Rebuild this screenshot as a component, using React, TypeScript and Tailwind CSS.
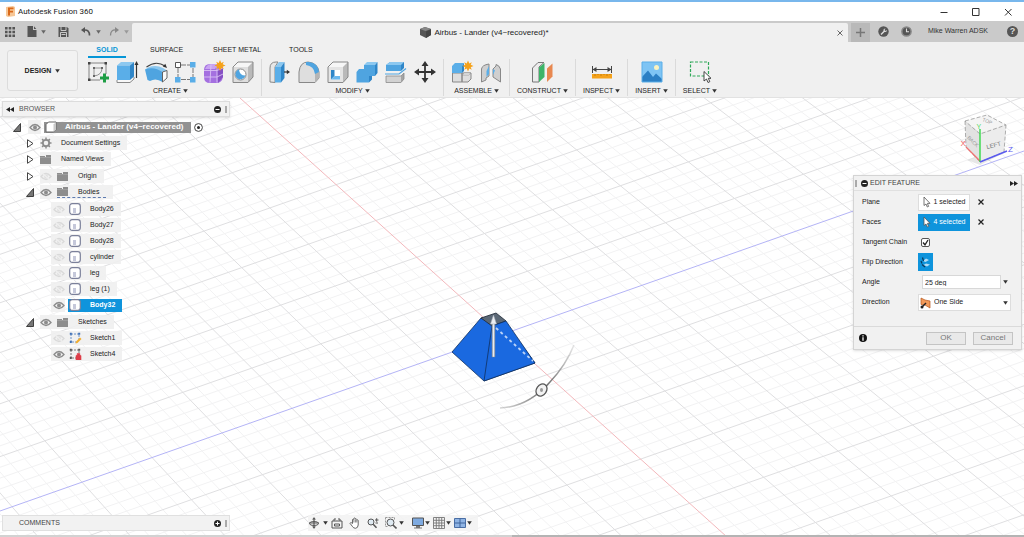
import React from "react";

type P = [number, number];

/* ---------- ground grid ---------- */

// Plane -> screen projection. u runs along the blue axis, v along the red axis.
const project = (u: number, v: number): P => {
  const w = 1 - 0.015 * v;
  return [502 + (70 * u + 44 * v) / w, 334.5 + (-24.6 * u + 39.7 * v) / w];
};

const line = (a: P, b: P) => `M${a[0].toFixed(1)} ${a[1].toFixed(1)}L${b[0].toFixed(1)} ${b[1].toFixed(1)}`;

const buildGrid = () => {
  let minor = "";
  let major = "";
  const n = 16;
  for (let i = -n * 5; i <= n * 5; i++) {
    if (i === 0) continue;
    const k = i / 5;
    const d = line(project(k, -n), project(k, n)) + line(project(-n, k), project(n, k));
    if (i % 5 === 0) major += d;
    else minor += d;
  }
  return { minor, major };
};

const grid = buildGrid();

const Scene = () => (
  <svg className="absolute inset-0 h-full w-full" viewBox="0 98 1024 437" preserveAspectRatio="xMidYMid slice" aria-hidden="true">
    <defs>
      <linearGradient id="shaft" x1="0" x2="1">
        <stop offset="0" stopColor="#8f9aa8" />
        <stop offset="0.5" stopColor="#e8ecf2" />
        <stop offset="1" stopColor="#8f9aa8" />
      </linearGradient>
      <linearGradient id="arc" x1="500" y1="408" x2="574" y2="345" gradientUnits="userSpaceOnUse">
        <stop offset="0" stopColor="#777" stopOpacity="0.3" />
        <stop offset="0.5" stopColor="#666" />
        <stop offset="1" stopColor="#888" stopOpacity="0.2" />
      </linearGradient>
    </defs>
    <path d={grid.minor} stroke="#f2f2f3" fill="none" />
    <path d={grid.major} stroke="#dfdfe1" fill="none" />
    <path d="M0 511L1024 151" stroke="#b4b4f6" fill="none" />
    <path d="M240 98L727 537" stroke="#f3b8bc" fill="none" />
    <path d="M452 352L481 318L504 321L535 363L484 381Z" fill="#1a69e0" stroke="#10305e" strokeWidth="0.8" />
    <path d="M481 318L496 313L506 321L492 326Z" fill="#5b6876" stroke="#1d2733" strokeWidth="0.8" />
    <path d="M492 326L506 321L535 363L484 381Z" fill="#1a69e0" stroke="#10305e" strokeWidth="0.8" />
    <path d="M496 328L533 361" stroke="#b9d2f8" strokeWidth="1.8" strokeDasharray="3 3" />
    <rect x="492" y="322" width="3" height="35" fill="url(#shaft)" stroke="#7d8896" strokeWidth="0.4" />
    <path d="M493.500 315L496.500 324H490.500Z" fill="#eceff3" stroke="#a5adb8" strokeWidth="0.5" />
    <path d="M500 408Q528 407 550 382Q566 365 574 345" stroke="url(#arc)" strokeWidth="1.500" fill="none" />
    <ellipse cx="541.500" cy="390" rx="5" ry="6.500" transform="rotate(35 541.5 390)" fill="#f2f2f2" stroke="#555" strokeWidth="1.300" />
    <ellipse cx="541.500" cy="390" rx="1.500" ry="2" fill="#999" />
  </svg>
);

const ViewCube = () => (
  <svg width="62" height="54" viewBox="956 112 62 54" className="block" role="img" aria-label="View cube">
    <path d="M967 160L980 165L1006 152L1000 148Z" fill="#00000018" />
    <path d="M965 121L980 132V162L966 147Z" fill="#e2e2e2" />
    <path d="M980 132L1006 125L1004 152L980 162Z" fill="#ececec" />
    <path d="M965 121L987 115L1006 125L980 133Z" fill="#f4f4f4" />
    <path d="M965 121L987 115L1006 125L980 134ZM965 121L966 147L980 162L1004 152L1006 125" fill="none" stroke="#999" strokeWidth="0.8" strokeDasharray="4 2" />
    <path d="M980 161L966 147" stroke="#f07070" strokeWidth="1.200" />
    <path d="M980 162V129" stroke="#34d848" strokeWidth="1.400" />
    <path d="M980 162L1007 151" stroke="#5a5af0" strokeWidth="1.400" />
    <text x="0" y="0" transform="translate(987 149) rotate(-14)" fontSize="6" fontFamily="Liberation Sans" fill="#777">LEFT</text>
    <text x="0" y="0" transform="translate(967 138) rotate(45)" fontSize="5" fontFamily="Liberation Sans" fill="#999">BACK</text>
    <text x="0" y="0" transform="translate(982 121) rotate(22)" fontSize="5" fontFamily="Liberation Sans" fill="#999">TOP</text>
    <text x="960.500" y="146" fontSize="8" fontFamily="Liberation Sans" fill="#f05a5a">X</text>
    <text x="976.500" y="129" fontSize="7" fontFamily="Liberation Sans" fill="#5ada66">Y</text>
    <text x="1008" y="152" fontSize="8" fontFamily="Liberation Sans" fill="#5a5af0">Z</text>
  </svg>
);

/* ---------- toolbar icons (24 x 24) ---------- */

const Ico = ({ children, size = 24 }: { children: React.ReactNode; size?: number }) => (
  <svg width={size} height={size} viewBox="0 0 24 24" fill="none" className="block shrink-0" aria-hidden="true">
    {children}
  </svg>
);

const Burst = ({ x, y }: { x: number; y: number }) => (
  <path
    transform={`translate(${x} ${y})`}
    d="M0 -5.500L1.300 -2.600L3.800 -3.800L2.700 -1.200L5.500 0L2.700 1.200L3.800 3.800L1.300 2.600L0 5.500L-1.300 2.600L-3.800 3.800L-2.700 1.200L-5.500 0L-2.700 -1.200L-3.800 -3.800L-1.300 -2.600Z"
    fill="#f5a21b"
  />
);

const icons: Record<string, React.ReactNode> = {
  "Create Sketch": (
    <Ico>
      <path d="M3 3H20M3 3V20H14M20 3V14" stroke="#777" strokeWidth="0.9" />
      <path d="M2 2h2.500v2.500H2zM18.500 2H21v2.500h-2.500zM2 18.500h2.500V21H2z" fill="#444" />
      <path d="M8 8H16Q16 15 8 16Z" stroke="#888" strokeWidth="0.9" />
      <path d="M7 7h2v2H7zM15 7h2v2h-2zM7 15h2v2H7z" fill="#666" />
      <path d="M18.500 13.500V22.500M14 18H23" stroke="#1e9e45" strokeWidth="3" />
    </Ico>
  ),
  Extrude: (
    <Ico>
      <path d="M2 20V22.500H15L19 19V17" stroke="#888" fill="#f8f8f8" />
      <path d="M2 5.500L6 2H19L15 5.500Z" fill="#8cc8f0" />
      <path d="M2 5.500H15V20H2Z" fill="#5aaee8" />
      <path d="M15 5.500L19 2V16.500L15 20Z" fill="#2f86c8" />
      <path d="M21.500 18V4" stroke="#333" strokeWidth="1.200" />
      <path d="M21.500 1L23.500 5H19.500Z" fill="#333" />
    </Ico>
  ),
  Revolve: (
    <Ico>
      <path d="M2.500 7Q12 0 21 6" stroke="#444" strokeWidth="1.100" />
      <path d="M23 8L18.800 6.500L21.300 3.800Z" fill="#333" />
      <path d="M1 9.500L4 7.500Q12 4.500 19 8L23 10.500L18 12Z" fill="#8cc8f0" />
      <path d="M1 9.500Q10 6 18.500 12V22Q12 17.500 6 21L3.500 20Z" fill="#4fa4e0" />
      <path d="M18.500 12L23 10.500V18L18.500 22Z" fill="#fafafa" stroke="#555" strokeWidth="0.9" />
    </Ico>
  ),
  Pattern: (
    <Ico>
      <path d="M8 5H18M5 8V17M8 19.500H18M20 8V17" stroke="#777" strokeDasharray="5 1" />
      <path d="M2.500 2.500H7.500V7.500H2.500Z" fill="#fff" stroke="#555" />
      <path d="M17 2H22.500V7.500H17ZM2 17H7.500V22.500H2ZM17 17H22.500V22.500H17Z" fill="#5aaee8" />
    </Ico>
  ),
  "Create Form": (
    <Ico>
      <path d="M2 10Q2 4 8 4H15Q21 4 21 10V17Q20 23 14 23H8Q2 23 2 17Z" fill="#a470e0" />
      <path d="M3 9Q5 4 10 4H16L13 9Z" fill="#c9a4f2" />
      <path d="M15 10L21 7V17L16 23Z" fill="#8550c4" />
      <path d="M9 4.500L8 22.500M15 5L15 22.500M2 10.500H15L21 8M2 17H15L21 14" stroke="#d9c2f5" strokeWidth="0.9" />
      <Burst x={18} y={5.5} />
    </Ico>
  ),
  Hole: (
    <Ico>
      <path d="M2 7L7 2H22L17 7Z" fill="#f6f6f6" />
      <path d="M17 7L22 2V17L17 22.500Z" fill="#b9b9b9" />
      <path d="M2 7H17V22.500H2Z" fill="#dedede" />
      <path d="M2 7L7 2H22V17L17 22.500H2Z" stroke="#888" />
      <circle cx="9.500" cy="14.500" r="5.500" fill="#fff" stroke="#888" />
      <path d="M8 9.500A5 5 0 1 0 14.300 15.500Q8.500 15.500 8 9.500Z" fill="#4fa4e0" />
    </Ico>
  ),
  "Press Pull": (
    <Ico>
      <path d="M2 22V8Q2 2 8 2H10L7 7V22.500Z" fill="#e6e6e6" stroke="#888" />
      <path d="M7 7L11 2H16.500L13 7Z" fill="#8cc8f0" />
      <path d="M7 7H13V22.500H7Z" fill="#5aaee8" />
      <path d="M13 7L16.500 2V18L13 22.500Z" fill="#2f86c8" />
      <path d="M16 12H20" stroke="#333" strokeWidth="1.200" />
      <path d="M22 12L18.800 9.800V14.200Z" fill="#333" />
    </Ico>
  ),
  Fillet: (
    <Ico>
      <path d="M2 22.500V12Q3 2 11 2Q21 3 22 12V18L18 22.500Z" fill="#dedede" stroke="#888" />
      <path d="M18 22.500V13L22 11V18Z" fill="#b5b5b5" />
      <path d="M9 2H12Q21 3 22 12L18 14Q17 6 9 5Z" fill="#4fa4e0" />
    </Ico>
  ),
  Shell: (
    <Ico>
      <path d="M2 7L7 2H22L17 7Z" fill="#f6f6f6" />
      <path d="M17 7L22 2V17L17 22.500Z" fill="#b9b9b9" />
      <path d="M2 7H17V22.500H2Z" fill="#e4e4e4" />
      <path d="M2 7L7 2H22V17L17 22.500H2Z" stroke="#888" />
      <path d="M5 10H14V19.500H5Z" fill="#fff" />
      <path d="M5 10V19.500L8.500 16V10Z" fill="#2f86c8" />
      <path d="M5 19.500H14V16H8.500Z" fill="#6bb8ee" />
    </Ico>
  ),
  Combine: (
    <Ico>
      <path d="M9 5L12 2H22.500L20 5Z" fill="#8cc8f0" />
      <path d="M1.500 12L4 9H9V5H20V16H14V22.500H1.500Z" fill="#4fa4e0" />
      <path d="M20 5L22.500 2V13L20 16ZM14 16H17V19.500L14 22.500Z" fill="#2f86c8" />
    </Ico>
  ),
  Split: (
    <Ico>
      <path d="M2 5L6 2H20L17 5V11H2Z" fill="#4fa4e0" />
      <path d="M2 5L6 2H20L17 5Z" fill="#8cc8f0" />
      <path d="M17 5L20 2V8L17 11Z" fill="#2f86c8" />
      <path d="M1 14H15L22 8.500" stroke="#4fa4e0" strokeWidth="1.200" />
      <path d="M2 16H17V22.500H2Z" fill="#d2d2d2" />
      <path d="M17 16L20 13V19L17 22.500Z" fill="#a5a5a5" />
      <path d="M2 16H17L20 13V19L17 22.500H2Z" stroke="#8c8c8c" strokeWidth="0.8" />
    </Ico>
  ),
  Move: (
    <Ico>
      <path d="M12 4V20M4 12H20" stroke="#333" strokeWidth="1.800" />
      <path d="M12 1L15.500 6H8.500ZM12 23L15.500 18H8.500ZM1 12L6 8.500V15.500ZM23 12L18 8.500V15.500Z" fill="#333" />
    </Ico>
  ),
  "New Component": (
    <Ico>
      <path d="M2.500 13H12V22H2.500ZM12 13H21V19L18 22H12Z" fill="#dedede" stroke="#888" />
      <path d="M12 15L14.500 13H21L18.500 15Z" fill="#f7f7f7" stroke="#888" strokeWidth="0.600" />
      <path d="M2 6L5 3H14L12 6V13H2Z" fill="#5aaee8" />
      <path d="M12 6L14 3V11L12 13Z" fill="#2f86c8" />
      <Burst x={18} y={6} />
    </Ico>
  ),
  Joint: (
    <Ico>
      <path d="M2.500 9Q3 5 10 4V16L7 18V20L2.500 22Z" fill="#cfcfcf" stroke="#888" />
      <path d="M21.500 9Q20 5 17 4.500V6L14 9V17L17 19L21.500 22Z" fill="#cfcfcf" stroke="#888" />
      <path d="M10 6L7.500 11V17L10 14ZM14 9L16 10.500L14 15Z" fill="#5aaee8" />
    </Ico>
  ),
  "Offset Plane": (
    <Ico>
      <path d="M2.500 8L8 2.500H14L9 7V22H2.500Z" fill="#ececec" stroke="#777" />
      <path d="M9 7.500L14.500 3V17L9 22Z" fill="#3cb468" />
      <path d="M17 8.500L22.500 3.500V16.500L17 22Z" fill="#e88850" />
    </Ico>
  ),
  Measure: (
    <Ico>
      <path d="M2.500 6V13M21.500 6V13M3 9.500H21" stroke="#444" />
      <path d="M2.500 9.500L6.500 7V12ZM21.500 9.500L17.500 7V12Z" fill="#444" />
      <path d="M2 14H22V18.500H2Z" fill="#f5a21b" />
      <path d="M5 14V16M8 14V15M11 14V16M14 14V15M17 14V16M20 14V15" stroke="#a86a00" strokeWidth="0.600" />
    </Ico>
  ),
  "Insert Image": (
    <Ico>
      <path d="M2 2H22V22H2Z" fill="#7ec4f4" />
      <path d="M2 17L8 10.500L13 17L16 13.500L22 19V22H2Z" fill="#2b7fc4" />
      <circle cx="16.500" cy="7.500" r="2.500" fill="#fbf3c0" />
      <path d="M2 2H22V22H2Z" stroke="#5aaee8" />
    </Ico>
  ),
  Select: (
    <Ico>
      <path d="M2.500 2H20.500V16H2.500Z" stroke="#2ea858" strokeWidth="1.200" strokeDasharray="3 1.500" />
      <path d="M16 11.500V21L18.500 19L20 22.500L21.800 21.700L20.300 18.300H23Z" fill="#fff" stroke="#333" strokeWidth="0.900" />
    </Ico>
  ),
};

const groups = [
  { label: "CREATE", tools: ["Create Sketch", "Extrude", "Revolve", "Pattern", "Create Form", "Hole"] },
  { label: "MODIFY", tools: ["Press Pull", "Fillet", "Shell", "Combine", "Split", "Move"] },
  { label: "ASSEMBLE", tools: ["New Component", "Joint"] },
  { label: "CONSTRUCT", tools: ["Offset Plane"] },
  { label: "INSPECT", tools: ["Measure"] },
  { label: "INSERT", tools: ["Insert Image"] },
  { label: "SELECT", tools: ["Select"] },
];

const Caret = ({ className = "text-[#333]" }: { className?: string }) => (
  <svg width="5" height="4" viewBox="0 0 5 4" className={`block shrink-0 ${className}`} aria-hidden="true">
    <path d="M0.200 0.200H4.800L2.500 3.800Z" fill="currentColor" />
  </svg>
);

/* ---------- window chrome ---------- */

const TitleBar = () => (
  <header className="flex h-[21px] items-center border-t-2 border-[#78b7ec] bg-white pl-[6px] text-[#222]">
    <svg width="9" height="11" viewBox="0 0 9 11" className="mr-[3px]" aria-hidden="true">
      <path d="M0 1L7 0L9 1V10L2 11L0 10Z" fill="#f7c796" />
      <path d="M2 1.500H7.500V3.200H4V4.800H7V6.400H4V9.500H2Z" fill="#d9691a" />
    </svg>
    <h1 className="font-[Roboto,sans-serif] text-[8px]">Autodesk Fusion 360</h1>
    <div className="ml-auto flex items-center text-[#333]">
      <button aria-label="Minimize" className="grid w-8 place-items-center">
        <svg width="8" height="8" viewBox="0 0 8 8"><path d="M0.500 4.500H7.500" stroke="currentColor" /></svg>
      </button>
      <button aria-label="Maximize" className="grid w-8 place-items-center">
        <svg width="8" height="8" viewBox="0 0 8 8"><path d="M0.500 0.500H7V7.500H0.500Z" fill="none" stroke="currentColor" /></svg>
      </button>
      <button aria-label="Close" className="grid w-8 place-items-center">
        <svg width="8" height="8" viewBox="0 0 8 8"><path d="M1 1L7.500 7.500M7.500 1L1 7.500" stroke="currentColor" /></svg>
      </button>
    </div>
  </header>
);

const TabBar = () => (
  <div className="flex h-[21px] items-stretch bg-[#cacaca] text-[#555]">
    <nav aria-label="Quick access" className="flex w-[132px] shrink-0 items-center pl-[5px]">
      <button aria-label="Data panel">
        <svg width="10" height="10" viewBox="0 0 10 10" fill="currentColor">
          <path d="M0 0h2.600v2.600H0zM3.700 0h2.600v2.600H3.700zM7.400 0H10v2.600H7.400zM0 3.700h2.600v2.600H0zM3.700 3.700h2.600v2.600H3.700zM7.400 3.700H10v2.600H7.400zM0 7.400h2.600V10H0zM3.700 7.400h2.600V10H3.700zM7.400 7.400H10V10H7.400z" />
        </svg>
      </button>
      <button aria-label="File" className="ml-3 flex items-center gap-1">
        <svg width="10" height="11" viewBox="0 0 10 11" fill="currentColor"><path d="M0.500 0H6V4H9.500V11H0.500ZM7 0.300L9.300 3H7Z" /></svg>
        <Caret className="text-[#666]" />
      </button>
      <button aria-label="Save" className="ml-3">
        <svg width="11" height="10" viewBox="0 0 11 10"><path d="M0.500 0H9L10.500 1.500V10H0.500Z" fill="currentColor" /><path d="M3 0V3.500H8V0M2.500 10V5.500H8.500V10M3.500 7.500H7.500" stroke="#cacaca" fill="none" /></svg>
      </button>
      <button aria-label="Undo" className="ml-3 flex items-center gap-[5px]">
        <svg width="10" height="9" viewBox="0 0 10 9"><path d="M4 0V6L0 3Z" fill="currentColor" /><path d="M3 3Q8.500 2.500 8.500 8.500" stroke="currentColor" strokeWidth="1.600" fill="none" /></svg>
        <Caret className="text-[#666]" />
      </button>
      <button aria-label="Redo" className="ml-2 flex items-center gap-[5px] text-[#888]">
        <svg width="10" height="9" viewBox="0 0 10 9"><path d="M6 0V6L10 3Z" fill="currentColor" /><path d="M7 3Q1.500 2.500 1.500 8.500" stroke="currentColor" strokeWidth="1.300" fill="none" /></svg>
        <Caret className="text-[#999]" />
      </button>
    </nav>
    <div className="mt-[2px] flex flex-1 items-center rounded-t-[2px] bg-[#f0f0f0] pr-[5px]">
      <div className="flex flex-1 items-center justify-center gap-[3px] text-[8px] text-[#222]">
        <svg width="11" height="11" viewBox="0 0 11 11" aria-hidden="true"><path d="M0 2L5 0L11 2V8L6 11L0 8Z" fill="#555" /><path d="M0 2L5.500 4L11 2L5 0Z" fill="#888" /><path d="M6 4.500V11L11 8V2.500Z" fill="#444" /></svg>
        <span>Airbus - Lander (v4~recovered)*</span>
      </div>
      <button aria-label="Close tab">
        <svg width="6" height="6" viewBox="0 0 6 6"><path d="M0.500 0.500L5.500 5.500M5.500 0.500L0.500 5.500" stroke="#666" /></svg>
      </button>
    </div>
    <div className="flex items-center">
      <button aria-label="New tab" className="ml-[3px] mt-[2px] grid h-[19px] w-[19px] place-items-center bg-[#b9b9b9]">
        <svg width="9" height="9" viewBox="0 0 9 9"><path d="M4.500 0V9M0 4.500H9" stroke="#777" strokeWidth="1.500" /></svg>
      </button>
      <button aria-label="Extensions" className="ml-2">
        <svg width="11" height="11" viewBox="0 0 11 11"><circle cx="5.500" cy="5.500" r="5.200" fill="#555" /><path d="M2.500 8L5.500 5Q5 2.500 7.500 2.500L6.500 4L7.500 5L9 4Q9 6.500 6.500 6L3.500 9Z" fill="#ddd" /></svg>
      </button>
      <button aria-label="Job status" className="ml-3">
        <svg width="11" height="11" viewBox="0 0 11 11"><circle cx="5.500" cy="5.500" r="4.600" fill="#555" stroke="#888" strokeWidth="1.500" /><path d="M5.500 2.500V5.800H8" stroke="#ddd" fill="none" strokeWidth="1.100" /></svg>
      </button>
      <button className="ml-4 text-[7px] text-[#333]">Mike Warren ADSK</button>
      <button aria-label="Help" className="mr-[6px] ml-[19px] grid h-[11px] w-[11px] place-items-center rounded-full bg-[#555] text-[9px] leading-none font-bold text-[#ddd]">?</button>
    </div>
  </div>
);

const Ribbon = () => (
  <div className="flex h-[56px] items-stretch border-b border-[#e2e2e2] bg-[#f0f0f0] text-[7px] leading-[10px] text-[#222]">
    <button className="mt-2 ml-[7px] flex h-[41px] w-[71px] shrink-0 items-center justify-center gap-1 rounded-[3px] border border-[#dcdcdc] bg-[#f2f2f2] font-bold">
      DESIGN <Caret />
    </button>
    <div className="ml-[2px] flex flex-col">
      <div role="tablist" className="flex pt-[3px] pl-2">
        <button role="tab" aria-selected="true" className="mr-6 w-[38px] border-b-2 border-[#0696d7] pb-px text-center font-bold text-[#0696d7]">SOLID</button>
        <button role="tab" className="mr-[30px] pb-[3px]">SURFACE</button>
        <button role="tab" className="mr-[28px] pb-[3px]">SHEET METAL</button>
        <button role="tab" className="pb-[3px]">TOOLS</button>
      </div>
      <div className="flex pt-px">
        {groups.map((g, i) => (
          <section
            key={g.label}
            aria-label={g.label}
            className={`flex flex-col items-center border-[#dadada] ${i < 6 ? "border-r" : ""} ${g.tools.length > 1 ? "px-[6px]" : "px-[7px]"}`}
          >
            <div className="flex gap-[5px] pt-px">
              {g.tools.map((t) => (
                <button key={t} aria-label={t}>{icons[t]}</button>
              ))}
            </div>
            <button className="mt-[2px] flex items-center gap-[2px]">
              {g.label} <Caret />
            </button>
          </section>
        ))}
      </div>
    </div>
  </div>
);

/* ---------- browser tree ---------- */

const Eye = ({ off }: { off?: boolean }) => (
  <svg width="12" height="9" viewBox="0 0 12 9" className="block shrink-0" aria-hidden="true">
    <path d="M1 4.500Q6 -1.500 11 4.500Q6 10.500 1 4.500Z" fill="none" stroke={off ? "#dadada" : "#8c8c8c"} strokeWidth="1.300" />
    <circle cx="6" cy="4.500" r="2" fill={off ? "#e0e0e0" : "#8c8c8c"} />
    {off && <path d="M2 1L10 8" stroke="#efefef" strokeWidth="1.200" />}
  </svg>
);

const Folder = () => (
  <svg width="11" height="9" viewBox="0 0 11 9" className="block shrink-0" aria-hidden="true">
    <path d="M0 1H5V2H6V0H11V9H0Z" fill="#8d8d8d" />
    <path d="M0 2.500H11" stroke="#a9a9a9" strokeWidth="0.600" />
  </svg>
);

const Body = () => (
  <svg width="12" height="12" viewBox="0 0 12 12" className="block shrink-0" aria-hidden="true">
    <rect x="0.700" y="0.700" width="10.600" height="10.600" rx="2.500" fill="#fff" stroke="#7b809a" strokeWidth="1.200" />
    <path d="M4 5H7V10H4Z" fill="#c5c8da" />
  </svg>
);

const Component = () => (
  <svg width="12" height="12" viewBox="0 0 12 12" className="block shrink-0" aria-hidden="true">
    <path d="M1 3.500L3.500 1H11V8.500L8.500 11H1Z" fill="#fff" stroke="#666" />
    <path d="M8.500 3.500L11 1V8.500L8.500 11Z" fill="#c9c9c9" />
  </svg>
);

const Gear = () => (
  <svg width="12" height="12" viewBox="0 0 12 12" className="block shrink-0" aria-hidden="true">
    <circle cx="6" cy="6" r="3.200" fill="none" stroke="#8a8a8a" strokeWidth="1.800" />
    <path d="M6 0.500V2.500M6 9.500V11.500M0.500 6H2.500M9.500 6H11.500M2.100 2.100L3.500 3.500M8.500 8.500L9.900 9.900M9.900 2.100L8.500 3.500M3.500 8.500L2.100 9.900" stroke="#8a8a8a" strokeWidth="1.500" />
  </svg>
);

const SketchIcon = ({ locked }: { locked?: boolean }) => (
  <svg width="13" height="12" viewBox="0 0 13 12" className="block shrink-0" aria-hidden="true">
    <path d="M2 2H10V9M2 2V10H7" fill="none" stroke={locked ? "#777" : "#6c93c8"} strokeDasharray="2 1" />
    <path d="M0.800 0.800h2v2h-2zM9.200 0.800h2v2h-2zM0.800 9h2v2h-2z" fill={locked ? "#555" : "#3f6fb5"} />
    {locked ? (
      <path d="M7 7.500H12V12H7ZM8.200 7.500V5.500H10.800V7.500" fill="#dd3c48" stroke="#dd3c48" strokeWidth="0.600" />
    ) : (
      <path d="M6.500 11.500L7 9.500L11 5.500L12.500 7L8.500 11Z" fill="#f2ae30" />
    )}
  </svg>
);

const Twisty = ({ open }: { open?: boolean }) => (
  <button aria-label={open ? "Collapse" : "Expand"} className="block shrink-0">
    <svg width="8" height="9" viewBox="0 0 8 9" className="block">
      {open ? <path d="M7.500 0.500V8.500H0.500Z" fill="#777" stroke="#333" strokeWidth="0.900" /> : <path d="M1.500 0.700L7 4.500L1.500 8.300Z" fill="#fff" stroke="#444" />}
    </svg>
  </button>
);

const Row = ({ indent, children }: { indent: string; children: React.ReactNode }) => (
  <div className={`flex h-4 items-center ${indent}`}>{children}</div>
);

const Chip = ({ children }: { children: React.ReactNode }) => (
  <div className="flex h-[14px] items-center bg-[#f0f0f0]/90 pr-[7px]">{children}</div>
);

const bodies = ["Body26", "Body27", "Body28", "cylinder", "leg", "leg (1)"];

const Browser = () => (
  <section aria-label="Browser" className="w-[228px]">
    <div className="flex h-4 items-center border border-[#dcdcdc] bg-[#f2f2f2] pl-[3px] text-[7px] text-[#555] shadow-sm">
      <svg width="8" height="5" viewBox="0 0 8 5" aria-hidden="true"><path d="M4 0V5L0 2.500ZM8 0V5L4 2.500Z" fill="#222" /></svg>
      <h2 className="ml-[5px]">BROWSER</h2>
      <button aria-label="Collapse browser" className="ml-auto">
        <svg width="7" height="7" viewBox="0 0 7 7"><circle cx="3.500" cy="3.500" r="3.500" fill="#222" /><path d="M1.500 3.500H5.500" stroke="#fff" /></svg>
      </button>
      <span className="ml-[4px] mr-[2px] h-[7px] w-[2px] border-x border-[#aaa]" />
    </div>
    <div className="pt-[2px] text-[7px] text-[#222]">
      <Row indent="pl-[11px]">
        <Twisty open />
        <div className="ml-[7px] flex h-[14px] items-center bg-[#f0f0f0] pl-px"><Eye /></div>
        <div className="ml-[3px] flex h-[11px] items-center bg-[#929292] pr-2 text-[8px] font-bold text-white">
          <span className="pl-px"><Component /></span>
          <span className="ml-[8px]">Airbus - Lander (v4~recovered)</span>
        </div>
        <svg width="9" height="9" viewBox="0 0 9 9" className="ml-[3px]" aria-hidden="true"><circle cx="4.500" cy="4.500" r="3.900" fill="#fff" stroke="#333" strokeWidth="0.900" /><circle cx="4.500" cy="4.500" r="1.500" fill="#222" /></svg>
      </Row>
      <Row indent="pl-[24px]"><Twisty /><span className="w-[6px]" /><Chip><Gear /><span className="ml-[9px]">Document Settings</span></Chip></Row>
      <Row indent="pl-[24px]"><Twisty /><span className="w-[6px]" /><Chip><Folder /><span className="ml-[10px]">Named Views</span></Chip></Row>
      <div className="pt-px">
        <Row indent="pl-[24px]"><Twisty /><span className="w-[6px]" /><Chip><Eye off /><span className="w-[5px]" /><Folder /><span className="ml-[10px]">Origin</span></Chip></Row>
        <Row indent="pl-[24px]">
          <Twisty open /><span className="w-[6px]" />
          <Chip>
            <Eye /><span className="w-[5px]" />
            <span className="flex items-center border-b border-dashed border-[#5d7bb0] pr-[7px]"><Folder /><span className="ml-[10px] leading-[10px]">Bodies</span></span>
          </Chip>
        </Row>
      </div>
      <div className="pt-px">
        {bodies.map((b) => (
          <Row key={b} indent="pl-[49px]"><Chip><span className="ml-[2px]" /><Eye off /><span className="w-[4px]" /><Body /><span className="ml-[9px]">{b}</span></Chip></Row>
        ))}
        <Row indent="pl-[49px]">
          <div className="flex h-[14px] items-center bg-[#f0f0f0]/90 pl-[2px]"><Eye /></div>
          <div className="ml-[3px] flex h-[13px] items-center bg-[#0f94dc] pr-[7px] pl-px font-bold text-white"><Body /><span className="ml-[9px]">Body32</span></div>
        </Row>
      </div>
      <div className="pt-px">
        <Row indent="pl-[24px]"><Twisty open /><span className="w-[6px]" /><Chip><Eye /><span className="w-[5px]" /><Folder /><span className="ml-[10px]">Sketches</span></Chip></Row>
        <Row indent="pl-[49px]"><Chip><span className="ml-[2px]" /><Eye off /><span className="w-[4px]" /><SketchIcon /><span className="ml-[8px]">Sketch1</span></Chip></Row>
        <Row indent="pl-[49px]"><Chip><span className="ml-[2px]" /><Eye /><span className="w-[4px]" /><SketchIcon locked /><span className="ml-[8px]">Sketch4</span></Chip></Row>
      </div>
    </div>
  </section>
);

/* ---------- edit dialog ---------- */

const Cursor = () => (
  <svg width="8" height="12" viewBox="0 0 8 12" className="shrink-0" aria-hidden="true"><path d="M1 1V9.500L3 8L4.300 11L5.600 10.400L4.400 7.400H7Z" fill="#fff" stroke="#555" strokeWidth="0.800" /></svg>
);

const Clear = ({ label }: { label: string }) => (
  <button type="button" aria-label={label} className="ml-2">
    <svg width="6" height="6" viewBox="0 0 6 6"><path d="M0.500 0.500L5.500 5.500M5.500 0.500L0.500 5.500" stroke="#222" strokeWidth="1.200" /></svg>
  </button>
);

const EditFeature = () => (
  <form aria-label="Edit feature" className="w-[169px] border border-[#d4d4d4] bg-[#f1f1f1] text-[7px] whitespace-nowrap text-[#222] shadow-sm" onSubmit={(e) => e.preventDefault()}>
    <div className="flex h-[15px] items-center border-b border-[#e0e0e0] text-[#444]">
      <span className="ml-px h-[7px] w-[2px] border-x border-[#aaa]" />
      <svg width="7" height="7" viewBox="0 0 7 7" className="ml-[4px]" aria-hidden="true"><circle cx="3.500" cy="3.500" r="3.500" fill="#222" /><path d="M1.500 3.500H5.500" stroke="#fff" /></svg>
      <h2 className="ml-[2px]">EDIT FEATURE</h2>
      <svg width="8" height="5" viewBox="0 0 8 5" className="mr-[3px] ml-auto" aria-hidden="true"><path d="M0 0V5L4 2.500ZM4 0V5L8 2.500Z" fill="#222" /></svg>
    </div>
    <div className="grid auto-rows-[20px] grid-cols-[56px_minmax(0,1fr)] items-center pt-px pr-[10px] pl-2">
      <span>Plane</span>
      <div className="flex items-center">
        <button type="button" className="flex h-[17px] w-[52px] items-center justify-center gap-[3px] border border-[#ddd] bg-white"><Cursor />1 selected</button>
        <Clear label="Clear plane" />
      </div>
      <span>Faces</span>
      <div className="flex items-center">
        <button type="button" className="flex h-[17px] w-[52px] items-center justify-center gap-[3px] border border-[#0f94dc] bg-[#0f94dc] text-white"><Cursor />4 selected</button>
        <Clear label="Clear faces" />
      </div>
      <label htmlFor="tangent">Tangent Chain</label>
      <div className="relative ml-[3px] h-[9px] w-[9px]">
        <input id="tangent" type="checkbox" defaultChecked className="peer block h-[9px] w-[9px] appearance-none rounded-[2px] border border-[#555] bg-white" />
        <svg viewBox="0 0 9 9" className="pointer-events-none absolute inset-0 hidden peer-checked:block"><path d="M2 4.500L4 6.800L7 2" fill="none" stroke="#222" strokeWidth="1.300" /></svg>
      </div>
      <span>Flip Direction</span>
      <button type="button" aria-label="Flip Direction" className="grid h-[18px] w-[15px] place-items-center bg-[#0f94dc]">
        <svg width="11" height="12" viewBox="0 0 11 12"><path d="M3 5L6 2.500L9 4L5.500 6ZM3.500 9L6 7.500L10 8.500L7 10.500Z" fill="#b4dcf4" /><path d="M2.500 1.500L3.500 5M1 5L2 7.500M5 11L2 8.500" stroke="#0b3a5c" strokeWidth="1.200" /></svg>
      </button>
      <label htmlFor="angle">Angle</label>
      <div className="flex items-center">
        <input id="angle" defaultValue="25 deg" className="ml-1 h-[14px] min-w-0 flex-1 border border-[#d8d8d8] bg-white pl-[2px]" />
        <button type="button" aria-label="Angle options" className="mr-[3px] ml-[2px]"><Caret /></button>
      </div>
      <label htmlFor="direction">Direction</label>
      <div className="relative">
        <select id="direction" className="block h-[17px] w-full appearance-none border border-[#ddd] bg-white pl-[15px]">
          <option>One Side</option>
        </select>
        <svg width="11" height="12" viewBox="0 0 11 12" className="pointer-events-none absolute top-[3px] left-[2px]" aria-hidden="true"><path d="M1 1L5 3L10 4V11L5 8L1 7.500Z" fill="#f29a5a" stroke="#b5561c" strokeWidth="0.700" /><path d="M1.500 10.500L6 6" stroke="#222" strokeWidth="1.500" /><circle cx="2" cy="10" r="1.500" fill="#222" /></svg>
        <span className="pointer-events-none absolute top-[7px] right-[3px]"><Caret /></span>
      </div>
    </div>
    <div className="mt-[14px] flex h-[23px] items-center border-t border-[#dadada] pl-[5px] text-[8px] text-[#777]">
      <svg width="8" height="8" viewBox="0 0 8 8" aria-hidden="true"><circle cx="4" cy="4" r="4" fill="#111" /><path d="M4 1.200V2.400M4 3.300V6.700" stroke="#fff" strokeWidth="1.300" /></svg>
      <button className="ml-auto flex h-[13px] w-10 items-center justify-center border border-[#c4c4c4] bg-[#e9e9e9]">OK</button>
      <button type="button" className="mr-2 ml-[7px] flex h-[13px] w-10 items-center justify-center border border-[#c4c4c4] bg-[#e9e9e9]">Cancel</button>
    </div>
  </form>
);

/* ---------- bottom bars ---------- */

const NavBar = () => (
  <nav aria-label="Navigation" className="flex h-4 items-center bg-[#f3f3f3]/90 pr-[6px] text-[#555]">
    <button aria-label="Orbit" className="flex items-center gap-[3px]">
      <svg width="12" height="12" viewBox="0 0 12 12" fill="none" stroke="currentColor"><path d="M6 1V11M1 6H11" strokeWidth="1.200" /><ellipse cx="6" cy="6.500" rx="4.500" ry="2" /><path d="M4.500 2.500L6 0.500L7.500 2.500M4.500 9.500L6 11.500L7.500 9.500" fill="currentColor" strokeWidth="0.500" /></svg>
      <Caret />
    </button>
    <button aria-label="Look at" className="ml-[3px]"><svg width="12" height="12" viewBox="0 0 12 12" fill="none" stroke="currentColor"><path d="M1 4H11V11H1ZM3.500 7H8.500V9H3.500ZM3 4V2H5M9 4V2H7" /></svg></button>
    <button aria-label="Pan" className="ml-[6px]"><svg width="12" height="12" viewBox="0 0 12 12"><path d="M3.500 6.500V2.500Q4.200 1.500 4.800 2.500V1.500Q5.600 0.500 6.300 1.500V2Q7.200 1.200 7.800 2.500V3Q8.800 2.500 9.200 3.500V8Q9 11 6.500 11.300Q4.500 11.300 3.300 9.300L1 6.300Q1.500 5.200 2.500 5.800Z" fill="#fff" stroke="currentColor" strokeWidth="0.900" /><path d="M4.900 2.500V5.500M6.400 2.500V5.500M7.800 3V5.500" stroke="currentColor" strokeWidth="0.700" /></svg></button>
    <button aria-label="Zoom" className="ml-[6px]"><svg width="12" height="12" viewBox="0 0 12 12" fill="none" stroke="currentColor"><circle cx="4" cy="5" r="3" fill="#dfeaf2" /><path d="M6.200 7.200L9.500 10.800" strokeWidth="1.500" /><path d="M8 3H11.500M9.700 1.200V4.800M8.500 6H11" /></svg></button>
    <button aria-label="Fit" className="ml-[6px] flex items-center gap-[2px]"><svg width="12" height="12" viewBox="0 0 12 12" fill="none" stroke="currentColor"><path d="M0.500 0.500H9.500V3M0.500 0.500V9.500H3" stroke="#999" strokeDasharray="2 1" /><circle cx="5.500" cy="5.500" r="3.500" fill="#dfeaf2" /><path d="M8 8L11.500 11.500" strokeWidth="1.600" /></svg><Caret /></button>
    <button aria-label="Display settings" className="ml-[8px] flex items-center gap-px"><svg width="12" height="12" viewBox="0 0 12 12"><path d="M0.500 1H11.500V8.500H0.500Z" fill="#7eaae0" stroke="#555" /><path d="M4 9H8V10.500H10V11.500H2V10.500H4Z" fill="#777" /></svg><Caret /></button>
    <button aria-label="Grid settings" className="ml-[3px] flex items-center gap-px"><svg width="12" height="12" viewBox="0 0 12 12" stroke="#777" fill="none" strokeWidth="0.900"><path d="M0.500 0.500H11.500V11.500H0.500ZM3.300 0.500V11.500M6 0.500V11.500M8.700 0.500V11.500M0.500 3.300H11.500M0.500 6H11.500M0.500 8.700H11.500" /></svg><Caret /></button>
    <button aria-label="Viewports" className="ml-[3px] flex items-center gap-px"><svg width="12" height="12" viewBox="0 0 12 12"><path d="M0.500 1.500H11.500V10.500H0.500Z" fill="#8fb4e4" stroke="#4a6ea5" /><path d="M6 1.500V10.500M0.500 6H11.500" stroke="#3f649c" /></svg><Caret /></button>
  </nav>
);

export default function App() {
  return (
    <div className="flex h-screen flex-col overflow-hidden bg-white font-['Liberation_Sans',Arial,sans-serif]">
      <TitleBar />
      <TabBar />
      <Ribbon />
      <main className="relative min-h-0 flex-1 bg-white">
        <Scene />
        <div className="absolute inset-0 flex flex-col justify-between">
          <div className="flex items-start justify-between px-[2px] pt-[3px]">
            <Browser />
            <div className="flex flex-col items-end pt-[11px]">
              <div className="mr-[4px] mb-[9px]"><ViewCube /></div>
              <EditFeature />
            </div>
          </div>
          <div className="flex items-center pb-1 pl-[2px]">
            <div className="flex h-4 w-[228px] items-center border border-[#e0e0e0] bg-[#f2f2f2] pl-4 text-[7px] text-[#444]">
              <h2>COMMENTS</h2>
              <button aria-label="Add comment" className="ml-auto">
                <svg width="7" height="7" viewBox="0 0 7 7"><circle cx="3.500" cy="3.500" r="3.500" fill="#222" /><path d="M1.500 3.500H5.500M3.500 1.500V5.500" stroke="#fff" /></svg>
              </button>
              <span className="ml-[4px] mr-[2px] h-[7px] w-[2px] border-x border-[#aaa]" />
            </div>
            <div className="ml-[78px]"><NavBar /></div>
          </div>
        </div>
      </main>
      <footer className="flex h-[2px]">
        <div className="flex-1 bg-[#d2d2d2]" />
        <div className="flex-1 bg-[#b4b4b4]" />
      </footer>
    </div>
  );
}
